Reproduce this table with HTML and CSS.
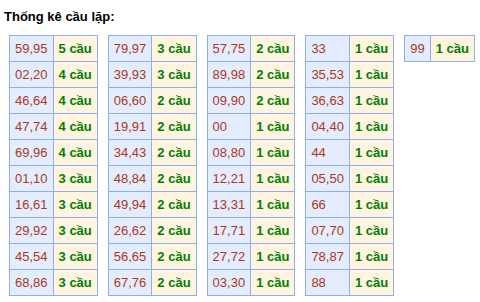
FILE: index.html
```html
<!DOCTYPE html>
<html lang="vi">
<head>
<meta charset="utf-8">
<title>Thống kê cầu lặp</title>
<link rel="stylesheet" href="styles.css">
</head>
<body>
<div class="title">Thống kê cầu lặp:</div>
<div class="tables">
  <table class="stat">
    <tr><td class="num">59,95</td><td class="cnt">5 cầu</td></tr>
    <tr><td class="num">02,20</td><td class="cnt">4 cầu</td></tr>
    <tr><td class="num">46,64</td><td class="cnt">4 cầu</td></tr>
    <tr><td class="num">47,74</td><td class="cnt">4 cầu</td></tr>
    <tr><td class="num">69,96</td><td class="cnt">4 cầu</td></tr>
    <tr><td class="num">01,10</td><td class="cnt">3 cầu</td></tr>
    <tr><td class="num">16,61</td><td class="cnt">3 cầu</td></tr>
    <tr><td class="num">29,92</td><td class="cnt">3 cầu</td></tr>
    <tr><td class="num">45,54</td><td class="cnt">3 cầu</td></tr>
    <tr><td class="num">68,86</td><td class="cnt">3 cầu</td></tr>
  </table>
  <table class="stat">
    <tr><td class="num">79,97</td><td class="cnt">3 cầu</td></tr>
    <tr><td class="num">39,93</td><td class="cnt">3 cầu</td></tr>
    <tr><td class="num">06,60</td><td class="cnt">2 cầu</td></tr>
    <tr><td class="num">19,91</td><td class="cnt">2 cầu</td></tr>
    <tr><td class="num">34,43</td><td class="cnt">2 cầu</td></tr>
    <tr><td class="num">48,84</td><td class="cnt">2 cầu</td></tr>
    <tr><td class="num">49,94</td><td class="cnt">2 cầu</td></tr>
    <tr><td class="num">26,62</td><td class="cnt">2 cầu</td></tr>
    <tr><td class="num">56,65</td><td class="cnt">2 cầu</td></tr>
    <tr><td class="num">67,76</td><td class="cnt">2 cầu</td></tr>
  </table>
  <table class="stat">
    <tr><td class="num">57,75</td><td class="cnt">2 cầu</td></tr>
    <tr><td class="num">89,98</td><td class="cnt">2 cầu</td></tr>
    <tr><td class="num">09,90</td><td class="cnt">2 cầu</td></tr>
    <tr><td class="num">00</td><td class="cnt">1 cầu</td></tr>
    <tr><td class="num">08,80</td><td class="cnt">1 cầu</td></tr>
    <tr><td class="num">12,21</td><td class="cnt">1 cầu</td></tr>
    <tr><td class="num">13,31</td><td class="cnt">1 cầu</td></tr>
    <tr><td class="num">17,71</td><td class="cnt">1 cầu</td></tr>
    <tr><td class="num">27,72</td><td class="cnt">1 cầu</td></tr>
    <tr><td class="num">03,30</td><td class="cnt">1 cầu</td></tr>
  </table>
  <table class="stat">
    <tr><td class="num">33</td><td class="cnt">1 cầu</td></tr>
    <tr><td class="num">35,53</td><td class="cnt">1 cầu</td></tr>
    <tr><td class="num">36,63</td><td class="cnt">1 cầu</td></tr>
    <tr><td class="num">04,40</td><td class="cnt">1 cầu</td></tr>
    <tr><td class="num">44</td><td class="cnt">1 cầu</td></tr>
    <tr><td class="num">05,50</td><td class="cnt">1 cầu</td></tr>
    <tr><td class="num">66</td><td class="cnt">1 cầu</td></tr>
    <tr><td class="num">07,70</td><td class="cnt">1 cầu</td></tr>
    <tr><td class="num">78,87</td><td class="cnt">1 cầu</td></tr>
    <tr><td class="num">88</td><td class="cnt">1 cầu</td></tr>
  </table>
  <table class="stat">
    <tr><td class="num">99</td><td class="cnt">1 cầu</td></tr>
  </table>
</div>
</body>
</html>
```
FILE: styles.css
```css
html, body {
  margin: 0;
  padding: 0;
  background: #ffffff;
  font-family: "Liberation Sans", Arial, sans-serif;
  font-size: 13px;
}
.title {
  font-weight: bold;
  color: #000;
  line-height: 15px;
  margin: 9px 0 11px 4px;
}
.tables {
  display: flex;
  align-items: flex-start;
  gap: 10px;
  padding-left: 9px;
}
.stat {
  border-collapse: collapse;
  border: 1px solid #8eaef0;
}
.stat td {
  border: 1px solid #8eaef0;
  padding: 5px;
  line-height: 15px;
  white-space: nowrap;
  text-align: left;
}
.num {
  background: #e3edfd;
  color: #b0361c;
}
.cnt {
  background: #fef4e0;
  color: #008000;
  font-weight: bold;
}
```
